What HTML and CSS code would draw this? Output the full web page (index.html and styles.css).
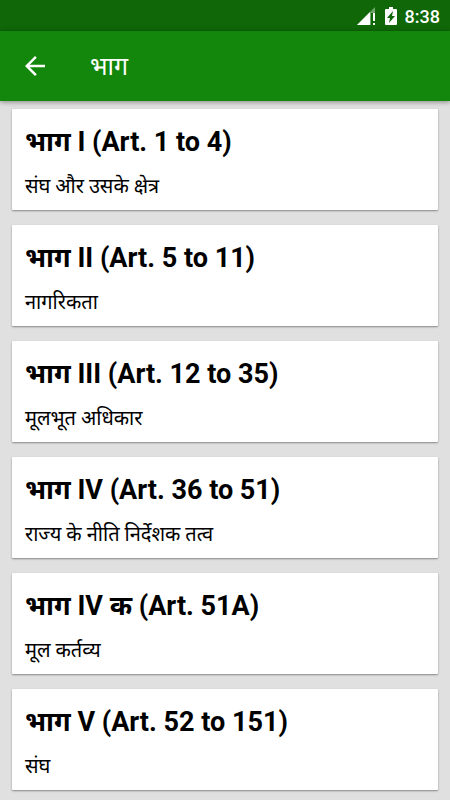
FILE: index.html
```html
<!DOCTYPE html>
<html lang="hi">
<head>
  <meta charset="UTF-8" />
  <meta name="viewport" content="width=device-width, initial-scale=1.0" />
  <title>भाग</title>
  <link rel="stylesheet" href="styles.css">
</head>
<body>
  <div class="status-bar">
    <svg class="signal" viewBox="0 0 18 18" aria-hidden="true">
      <path d="M18 0v6h-4v12H0z" fill="#fff" fill-opacity="0.4" />
      <path d="M13 5v13H0z" fill="#fff" />
      <path d="M16 6h2v8h-2zM16 16h2v2h-2z" fill="#fff" />
    </svg>
    <svg class="battery" viewBox="0 0 12 18" aria-hidden="true">
      <path fill="#fff" fill-rule="evenodd" d="M4 0h4v2h3q1 0 1 1v14q0 1-1 1H1q-1 0-1-1V3q0-1 1-1h3zM8 4l-6 7h3l-1 5 6-7H7z" />
    </svg>
    <span class="clock">8:38</span>
  </div>

  <header class="toolbar">
    <button class="back" type="button" aria-label="Back">
      <svg viewBox="0 0 24 24" aria-hidden="true">
        <path fill="#fff" d="M20 11H7.83l5.59-5.59L12 4l-8 8 8 8 1.41-1.41L7.83 13H20z" />
      </svg>
    </button>
    <h1>भाग</h1>
  </header>

  <main class="list">
    <article class="card">
      <h2>भाग I (Art. 1 to 4)</h2>
      <p>संघ और उसके क्षेत्र</p>
    </article>
    <article class="card">
      <h2>भाग II (Art. 5 to 11)</h2>
      <p>नागरिकता</p>
    </article>
    <article class="card">
      <h2>भाग III (Art. 12 to 35)</h2>
      <p>मूलभूत अधिकार</p>
    </article>
    <article class="card">
      <h2>भाग IV (Art. 36 to 51)</h2>
      <p>राज्य के नीति निर्देशक तत्व</p>
    </article>
    <article class="card">
      <h2>भाग IV क (Art. 51A)</h2>
      <p>मूल कर्तव्य</p>
    </article>
    <article class="card">
      <h2>भाग V (Art. 52 to 151)</h2>
      <p>संघ</p>
    </article>
  </main>
</body>
</html>
```
FILE: styles.css
```css
* {
  box-sizing: border-box;
}

body {
  margin: 0;
  background: #e0e0e0;
  color: #000;
  font-family: Roboto, "Noto Sans Devanagari", "Noto Sans", sans-serif;
}

.status-bar {
  display: flex;
  align-items: center;
  justify-content: flex-end;
  height: 31px;
  padding: 1px 10px 0;
  background: #0f6708;
  color: #fff;
}

.signal {
  width: 18px;
  height: 18px;
  margin-right: 10px;
}

.battery {
  width: 12px;
  height: 18px;
  margin-right: 8px;
}

.clock {
  font-size: 18px;
  font-weight: 500;
}

.toolbar {
  position: relative;
  display: flex;
  align-items: center;
  height: 70px;
  padding: 0 20px;
  background: #13870b;
  color: #fff;
  box-shadow: 0 1px 5px rgba(0, 0, 0, 0.4);
}

.back {
  width: 30px;
  height: 30px;
  margin-right: 40px;
  padding: 0;
  border: none;
  background: none;
  cursor: pointer;
}

.back svg {
  display: block;
  width: 30px;
  height: 30px;
}

.toolbar h1 {
  margin: 0;
  padding-top: 5px;
  font-size: 25px;
  font-weight: 400;
}

.list {
  display: flex;
  flex-direction: column;
  gap: 15px;
  padding: 8px 12px;
}

.card {
  padding: 13px 13px 11px;
  border-radius: 1px;
  background: #fff;
  box-shadow: 0 1px 2px rgba(0, 0, 0, 0.4);
}

.card h2 {
  margin: 0 0 12px;
  font-size: 27px;
  font-weight: 700;
  line-height: 40px;
}

.card p {
  margin: 0;
  font-size: 20px;
  line-height: 25px;
}
```
